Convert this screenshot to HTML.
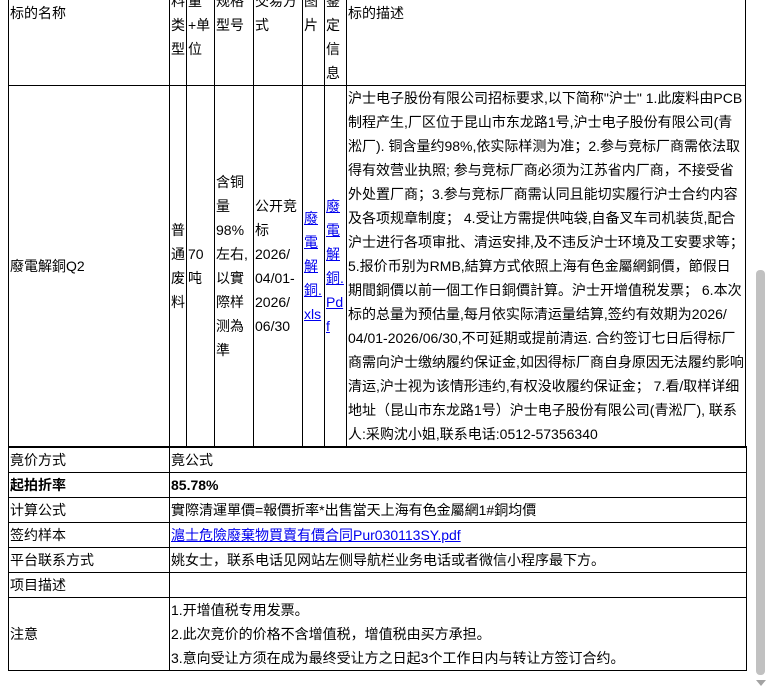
<!DOCTYPE html>
<html><head><meta charset="utf-8"><style>
html,body{margin:0;padding:0;background:#fff;overflow:hidden;width:767px;height:693px}
body{font-family:"Liberation Sans","Noto Sans CJK SC",sans-serif;font-size:14px;line-height:24px;color:#000;position:relative}
table{border-collapse:collapse;table-layout:fixed;position:absolute;left:8px}
td{border:1px solid #000;padding:0 0 0 1px;vertical-align:middle;white-space:nowrap;overflow:hidden}
a{color:#00e;text-decoration:underline}
#t1{top:-61px;width:738px}
#t2{top:446px;width:738px;border:1px solid #000;border-top:2px solid #000}
#t2 td{height:24px}
.sb{position:absolute;left:752px;top:0;width:15px;height:693px;background:#fff}
.th{position:absolute;left:756px;top:270px;width:9px;height:405px;background:#c1c1c1;border-radius:4px}
.ar{position:absolute;left:756px;top:680px;width:0;height:0;border-left:5px solid transparent;border-right:5px solid transparent;border-top:6px solid #a3a3a3}
</style></head><body>
<table id="t1">
<colgroup><col style="width:161px"><col style="width:17px"><col style="width:28px"><col style="width:39px"><col style="width:49px"><col style="width:22px"><col style="width:22px"><col style="width:399px"></colgroup>
<tr style="height:146px">
<td>标的名称</td>
<td>物<br>料<br>类<br>型</td>
<td>数<br>量<br>+单<br>位</td>
<td>规格<br>型号</td>
<td>交易方<br>式</td>
<td>图<br>片</td>
<td>检<br>验<br>鉴<br>定<br>信<br>息</td>
<td>标的描述</td>
</tr>
<tr style="height:361px">
<td>廢電解銅Q2</td>
<td>普<br>通<br>废<br>料</td>
<td>70<br>吨</td>
<td>含铜<br>量<br>98%<br>左右,<br>以實<br>際样<br>测為<br>準</td>
<td>公开竞<br>标<br>2026/<br>04/01-<br>2026/<br>06/30</td>
<td><a>廢<br>電<br>解<br>銅.<br>xls</a></td>
<td><a>廢<br>電<br>解<br>銅.<br>Pd<br>f</a></td>
<td>沪士电子股份有限公司招标要求,以下简称"沪士" 1.此废料由PCB<br>制程产生,厂区位于昆山市东龙路1号,沪士电子股份有限公司(青<br>淞厂). 铜含量约98%,依实际样测为准；2.参与竞标厂商需依法取<br>得有效营业执照; 参与竞标厂商必须为江苏省内厂商，不接受省<br>外处置厂商；3.参与竞标厂商需认同且能切实履行沪士合约内容<br>及各项规章制度；  4.受让方需提供吨袋,自备叉车司机装货,配合<br>沪士进行各项审批、清运安排,及不违反沪士环境及工安要求等；<br>5.报价币别为RMB,結算方式依照上海有色金屬網銅價，節假日<br>期間銅價以前一個工作日銅價計算。沪士开增值税发票；  6.本次<br>标的总量为预估量,每月依实际清运量结算,签约有效期为2026/<br>04/01-2026/06/30,不可延期或提前清运. 合约签订七日后得标厂<br>商需向沪士缴纳履约保证金,如因得标厂商自身原因无法履约影响<br>清运,沪士视为该情形违约,有权没收履约保证金；  7.看/取样详细<br>地址（昆山市东龙路1号）沪士电子股份有限公司(青淞厂), 联系<br>人:采购沈小姐,联系电话:0512-57356340</td>
</tr>
</table>
<table id="t2">
<colgroup><col style="width:161px"><col style="width:577px"></colgroup>
<tr><td>竟价方式</td><td>竟公式</td></tr>
<tr><td><b>起拍折率</b></td><td><b>85.78%</b></td></tr>
<tr><td>计算公式</td><td>實際清運單價=報價折率*出售當天上海有色金屬網1#銅均價</td></tr>
<tr><td>签约样本</td><td><a>滬士危險廢棄物買賣有價合同Pur030113SY.pdf</a></td></tr>
<tr><td>平台联系方式</td><td>姚女士，联系电话见网站左侧导航栏业务电话或者微信小程序最下方。</td></tr>
<tr><td>项目描述</td><td></td></tr>
<tr><td style="height:72px">注意</td><td>1.开增值税专用发票。<br>2.此次竞价的价格不含增值税，增值税由买方承担。<br>3.意向受让方须在成为最终受让方之日起3个工作日内与转让方签订合约。</td></tr>
</table>
<div class="sb"></div><div class="th"></div><div class="ar"></div>
</body></html>
